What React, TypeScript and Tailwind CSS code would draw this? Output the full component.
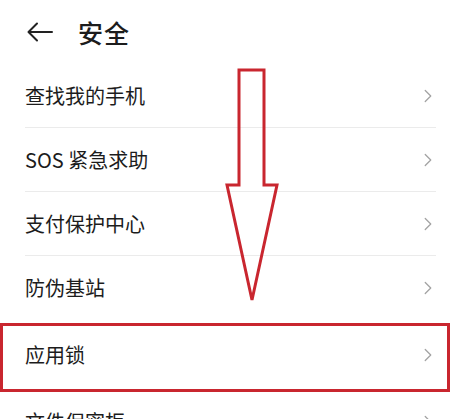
import { ChevronRight } from 'lucide-react'

const items = ['查找我的手机', 'SOS 紧急求助', '支付保护中心', '防伪基站', '应用锁', '文件保密柜']

export default function App() {
  return (
    <div
      className="relative w-[451px] h-[419px] overflow-hidden bg-white text-[#1c1c1c]"
      style={{ fontFamily: '"Noto Sans CJK SC", "Noto Sans", sans-serif' }}
    >
      {/* Header */}
      <div className="flex items-center h-[64px] pl-[27px]">
        <svg width="26" height="20" viewBox="0 0 26 20" fill="none" stroke="#222" strokeWidth="2" strokeLinecap="round" strokeLinejoin="round">
          <path d="M25 10H2" />
          <path d="M10 1.5L1.5 10L10 18.5" />
        </svg>
        <h1 className="ml-[25px] text-[25px] font-medium leading-none tracking-[1px]">安全</h1>
      </div>

      {/* List */}
      <div className="flex flex-col">
        {items.map((label, i) => (
          <div
            key={label}
            className={
              i === 4
                ? 'flex items-center h-[70px] pl-[25px] pr-[15px]'
                : 'flex items-center h-[64px] pl-[25px] pr-[15px]'
            }
          >
            <div
              className={
                i < 3
                  ? 'flex flex-1 items-center h-full border-b border-[#ebebeb] mr-[0px]'
                  : 'flex flex-1 items-center h-full'
              }
            >
              <span className="flex-1 text-[20px] leading-none">{label}</span>
              <ChevronRight className="w-[22px] h-[22px] text-[#a3a3a3] mr-[-3px]" strokeWidth={1.4} />
            </div>
          </div>
        ))}
      </div>

      {/* Annotation: red box */}
      <div className="absolute left-0 top-[323px] w-[450px] h-[69px] border-[3px] border-[#c9262f] pointer-events-none" />

      {/* Annotation: arrow */}
      <svg className="absolute inset-0 pointer-events-none" width="451" height="419" viewBox="0 0 451 419">
        <polygon
          points="239,70 264,70 264,185 277,185 252,300 227,185 239,185"
          fill="none"
          stroke="#c9262f"
          strokeWidth="3"
          strokeLinejoin="miter"
        />
      </svg>
    </div>
  )
}
